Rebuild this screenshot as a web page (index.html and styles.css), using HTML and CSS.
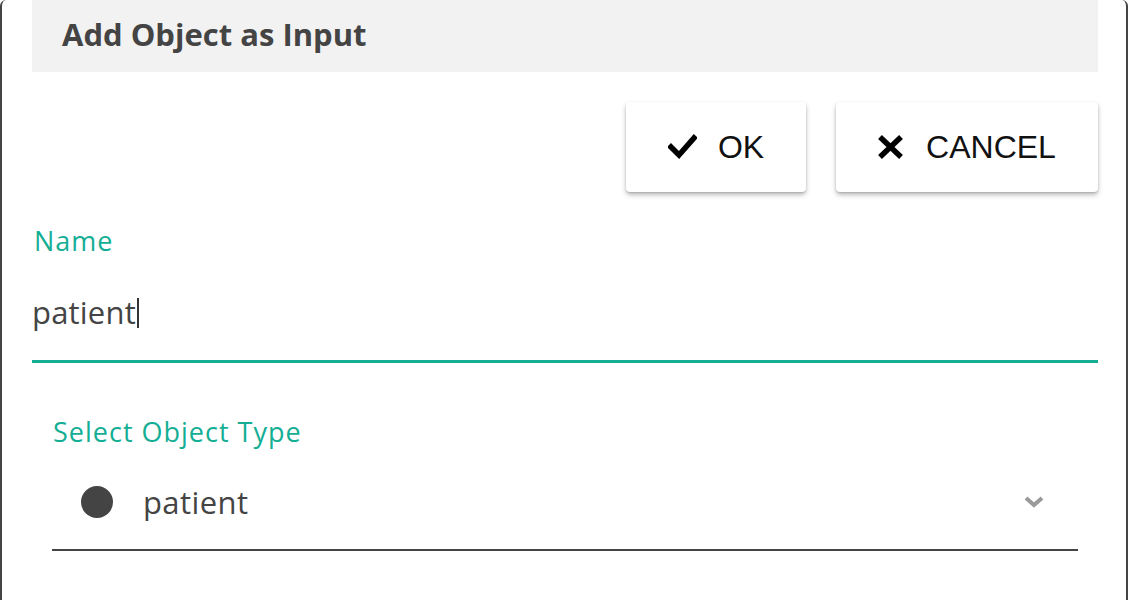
FILE: index.html
```html
<!DOCTYPE html>
<html lang="en">
<head>
  <meta charset="UTF-8">
  <title>Add Object as Input</title>
  <link rel="stylesheet" href="styles.css">
</head>
<body>
  <div class="dialog">
    <div class="dialog-header">
      <h2>Add Object as Input</h2>
    </div>
    <div class="actions">
      <button class="btn btn-ok">
        <svg width="29" height="26" viewBox="0 0 29 26"><path d="M3 13 L11 21 L26 4" fill="none" stroke="#000" stroke-width="5.5" stroke-linecap="square"/></svg>
        OK
      </button>
      <button class="btn btn-cancel">
        <svg width="29" height="28" viewBox="0 0 29 28"><path d="M4 4 L25 24 M25 4 L4 24" fill="none" stroke="#000" stroke-width="5.5"/></svg>
        CANCEL
      </button>
    </div>
    <div class="field">
      <label class="field-label">Name</label>
      <div class="field-input">patient<span class="caret"></span></div>
    </div>
    <div class="select-field">
      <label class="field-label">Select Object Type</label>
      <div class="select-box">
        <span class="dot"></span>
        <span class="select-value">patient</span>
        <svg class="chevron" width="20" height="12" viewBox="0 0 20 12"><path d="M2 2 L10 9 L18 2" fill="none" stroke="#9a9a9a" stroke-width="4"/></svg>
      </div>
    </div>
  </div>
</body>
</html>
```

FILE: styles.css
```css
* {
  box-sizing: border-box;
}
body {
  margin: 0;
  background: #fff;
  font-family: 'Open Sans', 'Noto Sans', sans-serif;
  color: #444;
}
.dialog {
  width: 1128px;
  height: 600px;
  border-left: 2px solid #444;
  border-right: 2px solid #444;
  border-top-left-radius: 6px;
  border-top-right-radius: 6px;
  padding: 0 28px 0 30px;
}
.dialog-header {
  background: #f2f2f2;
  height: 72px;
  display: flex;
  align-items: center;
  padding: 0 0 4px 30px;
}
.dialog-header h2 {
  margin: 0;
  font-size: 31px;
  font-weight: 700;
  color: #444;
}
.actions {
  display: flex;
  justify-content: flex-end;
  gap: 30px;
  margin-top: 30px;
}
.btn {
  height: 90px;
  display: flex;
  align-items: center;
  justify-content: center;
  gap: 21px;
  background: #fff;
  border: none;
  border-radius: 4px;
  box-shadow: 0 3px 5px rgba(0, 0, 0, 0.25), 0 1px 2px rgba(0, 0, 0, 0.15);
  font-family: 'Liberation Sans', Arial, sans-serif;
  font-size: 32px;
  color: #111;
  cursor: pointer;
}
.btn-ok {
  width: 180px;
  padding-right: 6px;
}
.btn-cancel {
  width: 262px;
  padding-left: 4px;
}
.field {
  margin-top: 34px;
}
.field-label {
  display: block;
  color: #14ae95;
  font-size: 27px;
  letter-spacing: 1px;
  line-height: 30px;
  padding-left: 2px;
}
.field-input {
  margin-top: 38px;
  font-size: 31px;
  letter-spacing: 0.2px;
  line-height: 36px;
  color: #444;
  padding-bottom: 30px;
  border-bottom: 3px solid #14ae95;
}
.caret {
  display: inline-block;
  width: 2px;
  height: 30px;
  background: #333;
  vertical-align: -4px;
  margin-left: 1px;
}
.select-field {
  margin: 54px 20px 0 20px;
}
.select-field .field-label {
  padding-left: 1px;
}
.select-box {
  display: flex;
  align-items: center;
  height: 104px;
  padding: 8px 34px 0 29px;
  border-bottom: 2px solid #444;
}
.dot {
  width: 32px;
  height: 32px;
  border-radius: 50%;
  background: #444;
  margin-right: 30px;
}
.select-value {
  font-size: 31px;
  letter-spacing: 0.4px;
  flex: 1;
}
```
